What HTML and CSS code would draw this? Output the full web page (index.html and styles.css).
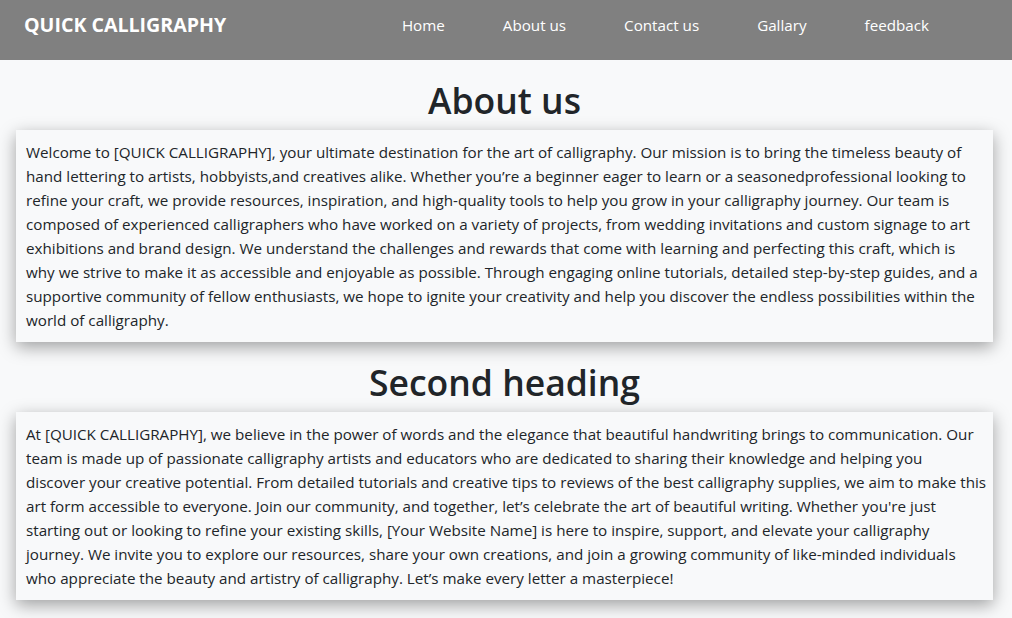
FILE: index.html
```html
<!DOCTYPE html>
<html lang="en">
<head>
<meta charset="utf-8">
<title>Quick Calligraphy - About us</title>
<link rel="stylesheet" href="styles.css">
</head>
<body>
<header class="navbar">
  <a class="brand" href="#">QUICK CALLIGRAPHY</a>
  <nav>
    <ul class="nav-links">
      <li><a href="#">Home</a></li>
      <li><a href="#">About us</a></li>
      <li><a href="#">Contact us</a></li>
      <li><a href="#">Gallary</a></li>
      <li><a href="#">feedback</a></li>
    </ul>
  </nav>
</header>
<main class="content">
  <h1 class="heading">About us</h1>
  <section class="card">
    <p>Welcome to [QUICK CALLIGRAPHY], your ultimate destination for the art of calligraphy. Our mission is to bring the timeless beauty of<br>hand lettering to artists, hobbyists,and creatives alike. Whether you’re a beginner eager to learn or a seasonedprofessional looking to<br>refine your craft, we provide resources, inspiration, and high-quality tools to help you grow in your calligraphy journey. Our team is<br>composed of experienced calligraphers who have worked on a variety of projects, from wedding invitations and custom signage to art<br>exhibitions and brand design. We understand the challenges and rewards that come with learning and perfecting this craft, which is<br>why we strive to make it as accessible and enjoyable as possible. Through engaging online tutorials, detailed step-by-step guides, and a<br>supportive community of fellow enthusiasts, we hope to ignite your creativity and help you discover the endless possibilities within the<br>world of calligraphy.</p>
  </section>
  <h1 class="heading">Second heading</h1>
  <section class="card">
    <p>At [QUICK CALLIGRAPHY], we believe in the power of words and the elegance that beautiful handwriting brings to communication. Our<br>team is made up of passionate calligraphy artists and educators who are dedicated to sharing their knowledge and helping you<br>discover your creative potential. From detailed tutorials and creative tips to reviews of the best calligraphy supplies, we aim to make this<br>art form accessible to everyone. Join our community, and together, let’s celebrate the art of beautiful writing. Whether you're just<br>starting out or looking to refine your existing skills, [Your Website Name] is here to inspire, support, and elevate your calligraphy<br>journey. We invite you to explore our resources, share your own creations, and join a growing community of like-minded individuals<br>who appreciate the beauty and artistry of calligraphy. Let’s make every letter a masterpiece!</p>
  </section>
</main>
</body>
</html>
```
FILE: styles.css
```css
* { box-sizing: border-box; }
html, body { margin: 0; padding: 0; }
body {
  background: #f8f9fa;
  color: #212529;
  font-family: "Open Sans", "Noto Sans", sans-serif;
  font-size: 15.2px;
  line-height: 24px;
}
.navbar {
  height: 60px;
  background: #808080;
  display: flex;
  align-items: center;
  justify-content: space-between;
  padding: 0 83px 10px 24px;
}
.brand {
  color: #fff;
  font-weight: 700;
  font-size: 19.6px;
  text-decoration: none;
}
.nav-links {
  list-style: none;
  display: flex;
  gap: 58px;
  margin: 0;
  padding: 0;
}
.nav-links a {
  color: #fff;
  text-decoration: none;
  font-size: 15.2px;
}
.content {
  padding: 0 19px 20px 16px;
}
.card p { margin: 0; white-space: nowrap; }
.heading {
  margin: 16px 0 6px;
  font-size: 35.5px;
  line-height: 48px;
  font-weight: 600;
  text-align: center;
}
.card {
  padding: 10px;
  background: #f8f9fa;
  box-shadow: 0 5px 16px rgba(0, 0, 0, 0.36);
}
```
